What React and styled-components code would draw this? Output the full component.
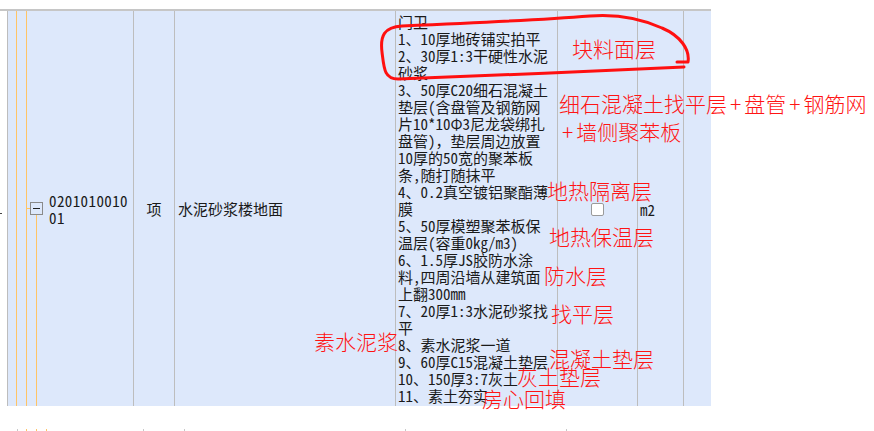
import React from 'react';
import styled, { createGlobalStyle } from 'styled-components';

const GlobalStyle = createGlobalStyle`
  html, body { margin: 0; padding: 0; background: #fff; overflow: hidden; }
  body {
    font-family: "Noto Sans Mono CJK SC", "Noto Sans CJK SC", monospace;
    font-size: 15px;
    color: #1a1a1a;
  }
`;

const BLUE = '#dde8fb';
const GRID = '#bdbdbd';
const TREE = '#ffc466';

const Page = styled.div`
  position: relative;
  width: 874px;
  height: 431px;
  padding-top: 9px;
  box-sizing: border-box;
  overflow: hidden;
`;

const Row = styled.div`
  display: flex;
  width: 711px;
  height: 397px;
  border-top: 2px solid #c6c6c6;
  box-sizing: border-box;
`;

const Cell = styled.div`
  flex: none;
  width: ${p => p.$w}px;
  box-sizing: border-box;
  border-right: ${p => (p.$last ? 'none' : `1px solid ${GRID}`)};
  background: ${p => (p.$white ? '#fff' : BLUE)};
  display: flex;
  align-items: center;
  justify-content: ${p => p.$justify || 'flex-start'};
  padding-left: ${p => p.$pl || 0}px;
  overflow: hidden;
  white-space: nowrap;
  line-height: 17px;
`;

const Dash = styled.span`
  width: 2px;
  height: 1px;
  margin-top: 10px;
  background: #444;
`;

const TreeCell = styled(Cell)`
  align-items: stretch;
`;

const Guide = styled.div`
  flex: none;
  width: ${p => p.$w}px;
  box-sizing: border-box;
  border-right: 1px solid ${TREE};
`;

const Stem = styled.div`
  flex: none;
  width: 16px;
  display: flex;
  flex-direction: column;
`;

const StemSpace = styled.div`
  flex: 1;
`;

const StemTail = styled.div`
  flex: 1;
  margin-left: 9px;
  border-left: 1px solid ${TREE};
`;

const BoxRow = styled.div`
  display: flex;
  align-items: center;
  height: 13px;
`;

const Connector = styled.span`
  width: 3px;
  height: 1px;
  background: ${TREE};
`;

const ExpandBox = styled.span`
  width: 13px;
  height: 13px;
  box-sizing: border-box;
  border: 1px solid #8a8a8a;
  background: ${BLUE};
  display: flex;
  align-items: center;
  justify-content: center;
  &::before {
    content: '';
    width: 7px;
    height: 1px;
    background: #222;
  }
`;

const CodeText = styled.div`
  align-self: center;
  margin-left: 6px;
  letter-spacing: 0.4px;
  line-height: 17px;
`;

const Lines = styled.div`
  display: flex;
  flex-direction: column;
`;

const Line = styled.div`
  height: 17px;
  line-height: 17px;
  white-space: nowrap;
`;

const CheckBox = styled.span`
  width: 13px;
  height: 13px;
  box-sizing: border-box;
  margin-top: 2px;
  border: 1px solid #9a9a9a;
  border-radius: 2px;
  background: #fff;
`;

const Unit = styled.span`
  margin-top: 1px;
`;

const NextRow = styled.div`
  display: flex;
  height: 2px;
  margin-top: 23px;
`;

const Stub = styled.div`
  flex: none;
  width: ${p => p.$w}px;
  box-sizing: border-box;
  border-right: 1px solid ${p => (p.$tree ? TREE : '#c8c8c8')};
`;

const Overlay = styled.svg`
  position: absolute;
  left: 0;
  top: 0;
  pointer-events: none;
`;

const Note = styled.span`
  position: absolute;
  left: ${p => p.$x}px;
  top: ${p => p.$y}px;
  font-family: "Noto Sans CJK SC", sans-serif;
  font-weight: 300;
  font-size: 21px;
  line-height: 21px;
  color: #ff1414;
  white-space: nowrap;
`;

const Plus = styled.span`
  margin: 0 3px;
`;

const desc = [
  '门卫',
  '1、10厚地砖铺实拍平',
  '2、30厚1:3干硬性水泥',
  '砂浆',
  '3、50厚C20细石混凝土',
  '垫层(含盘管及钢筋网',
  '片10*10Φ3尼龙袋绑扎',
  '盘管)，垫层周边放置',
  '10厚的50宽的聚苯板',
  '条,随打随抹平',
  '4、0.2真空镀铝聚酯薄',
  '膜',
  '5、50厚模塑聚苯板保',
  '温层(容重0kg/m3)',
  '6、1.5厚JS胶防水涂',
  '料,四周沿墙从建筑面',
  '上翻300mm',
  '7、20厚1:3水泥砂浆找',
  '平',
  '8、素水泥浆一道',
  '9、60厚C15混凝土垫层',
  '10、150厚3:7灰土',
  '11、素土夯实',
];

const notes = [
  { x: 572, y: 38, t: '块料面层' },
  { x: 547, y: 180, t: '地热隔离层' },
  { x: 549, y: 226, t: '地热保温层' },
  { x: 544, y: 265, t: '防水层' },
  { x: 551, y: 303, t: '找平层' },
  { x: 549, y: 348, t: '混凝土垫层' },
  { x: 517, y: 366, t: '灰土垫层' },
  { x: 482, y: 388, t: '房心回填' },
  { x: 314, y: 331, t: '素水泥浆' },
];

export default function App() {
  return (
    <>
      <GlobalStyle />
      <Page>
        <Row>
          <Cell $w={8} $white $justify="flex-start">
            <Dash />
          </Cell>
          <TreeCell $w={126}>
            <Guide $w={9} />
            <Guide $w={10} />
            <Stem>
              <StemSpace />
              <BoxRow>
                <Connector />
                <ExpandBox />
              </BoxRow>
              <StemTail />
            </Stem>
            <CodeText>
              0201010010
              <br />
              01
            </CodeText>
          </TreeCell>
          <Cell $w={41} $justify="center">项</Cell>
          <Cell $w={221} $pl={3}>水泥砂浆楼地面</Cell>
          <Cell $w={162} $pl={2}>
            <Lines>
              {desc.map((l, i) => (
                <Line key={i}>{l}</Line>
              ))}
            </Lines>
          </Cell>
          <Cell $w={80} $justify="center">
            <CheckBox />
          </Cell>
          <Cell $w={46} $pl={2}>
            <Unit>m2</Unit>
          </Cell>
          <Cell $w={27} $last />
        </Row>
        <NextRow>
          <Stub $w={18} />
          <Stub $w={9} $tree />
          <Stub $w={10} $tree />
          <Stub $w={10} $tree />
          <Stub $w={97} />
          <Stub $w={41} />
          <Stub $w={221} />
          <Stub $w={161} />
        </NextRow>

        <Overlay width="874" height="431" viewBox="0 0 874 431">
          <path
            d="M677 62 L688 62 C690 50 681 36 662 28 C642 19 616 14 590 16 C540 20 450 24 402 26 C384 27 380 36 382 52 C384 68 384 79 398 79 C480 76 600 71 684 67"
            fill="none"
            stroke="#ff1010"
            strokeWidth="3"
            strokeLinecap="round"
            strokeLinejoin="round"
          />
        </Overlay>
        {notes.map(n => (
          <Note key={n.t} $x={n.x} $y={n.y}>{n.t}</Note>
        ))}
        <Note $x={559} $y={93}>
          细石混凝土找平层<Plus>+</Plus>盘管<Plus>+</Plus>钢筋网
        </Note>
        <Note $x={559} $y={121}>
          <Plus>+</Plus>墙侧聚苯板
        </Note>
      </Page>
    </>
  );
}
